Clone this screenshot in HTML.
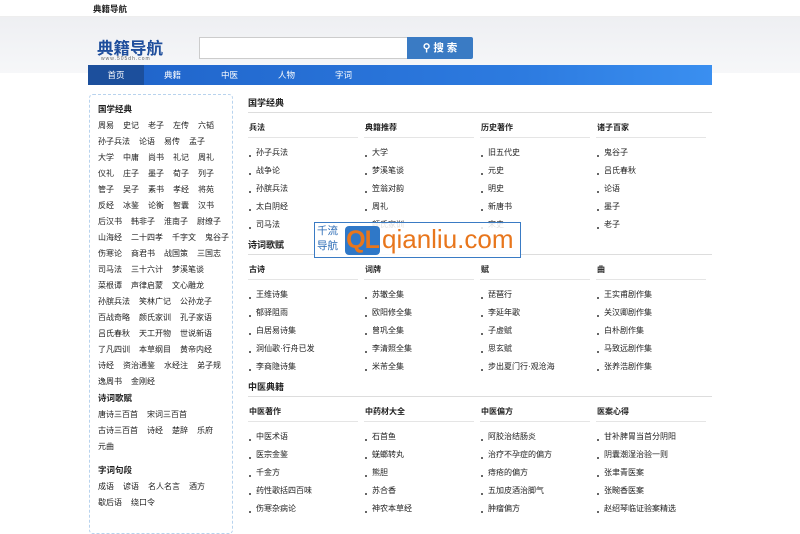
<!DOCTYPE html>
<html><head><meta charset="utf-8"><style>
*{margin:0;padding:0;box-sizing:border-box}
body{width:800px;height:515px;overflow:hidden;background:#fff;font-family:"Liberation Sans","Noto Sans CJK SC",sans-serif;font-size:8px;color:#222;position:relative}
.top{height:17px;background:#fff;border-bottom:1px solid #eee;position:relative}
.top b{position:absolute;left:93px;top:3px;font-size:8.5px}
.hd{position:absolute;top:17px;left:0;width:800px;height:56px;background:linear-gradient(#eeeff2,#f6f7f9)}
.logo{position:absolute;left:97px;top:35px;color:#1f4e9c;font-size:16.5px;font-weight:bold;letter-spacing:0}
.logo small{display:block;font-size:5px;color:#666;letter-spacing:1px;font-weight:normal;margin-left:4px;margin-top:-3px}
.inp{position:absolute;left:199px;top:37px;width:209px;height:22px;border:1px solid #ccc;background:#fff}
.btn{position:absolute;left:407px;top:37px;width:66px;height:22px;background:#3a7bc4;color:#fff;font-size:10.5px;font-weight:bold;text-align:center;line-height:22px;border-radius:0 2px 2px 0}
.nav{position:absolute;left:88px;top:65px;width:624px;height:20px;background:linear-gradient(90deg,#1f63c9,#2d7be0 70%,#3a8ff0)}
.nav span{float:left;width:57px;text-align:center;color:#fff;line-height:20px;font-size:8.5px}
.nav span.on{background:#1c4f9c;width:56px}
.side{position:absolute;left:89px;top:94px;width:144px;height:440px;border:1px dashed #b8d3ee;border-radius:4px}
.sb{position:absolute;left:98px;white-space:nowrap}
.sb div{height:16px;line-height:16px}
.sb a{margin-right:9px}
.sh{position:absolute;left:98px;font-weight:bold;font-size:8.5px;line-height:12px}
.main{position:absolute;left:248px;top:96px;width:464px}
.sec h3{font-size:9px;font-weight:bold;height:17px;border-bottom:1px solid #ddd;line-height:14px}
.cols{display:flex}
.col{width:118px}
.col h5{font-size:8px;font-weight:bold;width:110px;border-bottom:1px solid #e5e5e5;height:25px;line-height:30px;padding-left:1px}
.col ul{list-style:none;padding-top:6px;padding-bottom:4px}
.col li{height:18px;line-height:18px;padding-left:8px;position:relative}
.col li:before{content:"";position:absolute;left:1px;top:11px;width:1.5px;height:1.5px;background:#666}
.wm{position:absolute;left:314px;top:222px;width:207px;height:36px;border:1px solid #3a7bc4;background:rgba(255,255,255,.85)}
.wm .t{position:absolute;left:2px;top:1px;font-size:10.5px;line-height:15px;color:#2a6ab5}
.wm .q{position:absolute;left:30px;top:3px;width:35px;height:29px;background:#2f78c8;border-radius:4px;color:#e8761c;font-size:25px;font-weight:bold;line-height:29px;text-align:center;letter-spacing:-1px}
.wm .u{position:absolute;left:67px;top:-2px;font-size:26px;color:#e8761c;line-height:36px}
</style></head><body>
<div class="top"><b>典籍导航</b></div>
<div class="hd"></div>
<div class="logo">典籍导航<small>www.505dh.com</small></div>
<div class="inp"></div>
<div class="btn">&#9906; 搜 索</div>
<div class="nav"><span class="on">首页</span><span>典籍</span><span>中医</span><span>人物</span><span>字词</span></div>
<div class="side"></div>
<div class="sh" style="top:103px">国学经典</div>
<div class="sb" style="top:118px">
<div><a>周易</a><a>史记</a><a>老子</a><a>左传</a><a>六韬</a></div>
<div><a>孙子兵法</a><a>论语</a><a>易传</a><a>孟子</a></div>
<div><a>大学</a><a>中庸</a><a>尚书</a><a>礼记</a><a>周礼</a></div>
<div><a>仪礼</a><a>庄子</a><a>墨子</a><a>荀子</a><a>列子</a></div>
<div><a>管子</a><a>吴子</a><a>素书</a><a>孝经</a><a>将苑</a></div>
<div><a>反经</a><a>冰鉴</a><a>论衡</a><a>智囊</a><a>汉书</a></div>
<div><a>后汉书</a><a>韩非子</a><a>淮南子</a><a>尉缭子</a></div>
<div><a>山海经</a><a>二十四孝</a><a>千字文</a><a>鬼谷子</a></div>
<div><a>伤寒论</a><a>商君书</a><a>战国策</a><a>三国志</a></div>
<div><a>司马法</a><a>三十六计</a><a>梦溪笔谈</a></div>
<div><a>菜根谭</a><a>声律启蒙</a><a>文心雕龙</a></div>
<div><a>孙膑兵法</a><a>笑林广记</a><a>公孙龙子</a></div>
<div><a>百战奇略</a><a>颜氏家训</a><a>孔子家语</a></div>
<div><a>吕氏春秋</a><a>天工开物</a><a>世说新语</a></div>
<div><a>了凡四训</a><a>本草纲目</a><a>黄帝内经</a></div>
<div><a>诗经</a><a>资治通鉴</a><a>水经注</a><a>弟子规</a></div>
<div><a>逸周书</a><a>金刚经</a></div>
</div>
<div class="sh" style="top:392px">诗词歌赋</div>
<div class="sb" style="top:407px">
<div><a>唐诗三百首</a><a>宋词三百首</a></div>
<div><a>古诗三百首</a><a>诗经</a><a>楚辞</a><a>乐府</a></div>
<div><a>元曲</a></div>
</div>
<div class="sh" style="top:464px">字词句段</div>
<div class="sb" style="top:479px">
<div><a>成语</a><a>谚语</a><a>名人名言</a><a>酒方</a></div>
<div><a>歇后语</a><a>绕口令</a></div>
</div>
<div class="main">
<div class="sec"><h3>国学经典</h3><div class="cols">
<div class="col"><h5>兵法</h5><ul><li>孙子兵法</li><li>战争论</li><li>孙膑兵法</li><li>太白阴经</li><li>司马法</li></ul></div>
<div class="col"><h5>典籍推荐</h5><ul><li>大学</li><li>梦溪笔谈</li><li>笠翁对韵</li><li>周礼</li><li>颜氏家训</li></ul></div>
<div class="col"><h5>历史著作</h5><ul><li>旧五代史</li><li>元史</li><li>明史</li><li>新唐书</li><li>宋史</li></ul></div>
<div class="col"><h5>诸子百家</h5><ul><li>鬼谷子</li><li>吕氏春秋</li><li>论语</li><li>墨子</li><li>老子</li></ul></div>
</div></div>
<div class="sec"><h3>诗词歌赋</h3><div class="cols">
<div class="col"><h5>古诗</h5><ul><li>王维诗集</li><li>郁驿阻雨</li><li>白居易诗集</li><li>洞仙歌·行舟已发</li><li>李商隐诗集</li></ul></div>
<div class="col"><h5>词牌</h5><ul><li>苏辙全集</li><li>欧阳修全集</li><li>曾巩全集</li><li>李清照全集</li><li>米芾全集</li></ul></div>
<div class="col"><h5>赋</h5><ul><li>琵琶行</li><li>李延年歌</li><li>子虚赋</li><li>思玄赋</li><li>步出夏门行·观沧海</li></ul></div>
<div class="col"><h5>曲</h5><ul><li>王实甫剧作集</li><li>关汉卿剧作集</li><li>白朴剧作集</li><li>马致远剧作集</li><li>张养浩剧作集</li></ul></div>
</div></div>
<div class="sec"><h3>中医典籍</h3><div class="cols">
<div class="col"><h5>中医著作</h5><ul><li>中医术语</li><li>医宗金鉴</li><li>千金方</li><li>药性歌括四百味</li><li>伤寒杂病论</li></ul></div>
<div class="col"><h5>中药材大全</h5><ul><li>石首鱼</li><li>蜣螂转丸</li><li>熊胆</li><li>苏合香</li><li>神农本草经</li></ul></div>
<div class="col"><h5>中医偏方</h5><ul><li>阿胶治结肠炎</li><li>治疗不孕症的偏方</li><li>痔疮的偏方</li><li>五加皮酒治脚气</li><li>肿瘤偏方</li></ul></div>
<div class="col"><h5>医案心得</h5><ul><li>甘补脾胃当首分阴阳</li><li>阴囊潮湿治验一则</li><li>张聿青医案</li><li>张畹香医案</li><li>赵绍琴临证验案精选</li></ul></div>
</div></div>
</div>
<div class="wm"><div class="t">千流<br>导航</div><div class="q">QL</div><div class="u">qianliu.com</div></div>
</body></html>
